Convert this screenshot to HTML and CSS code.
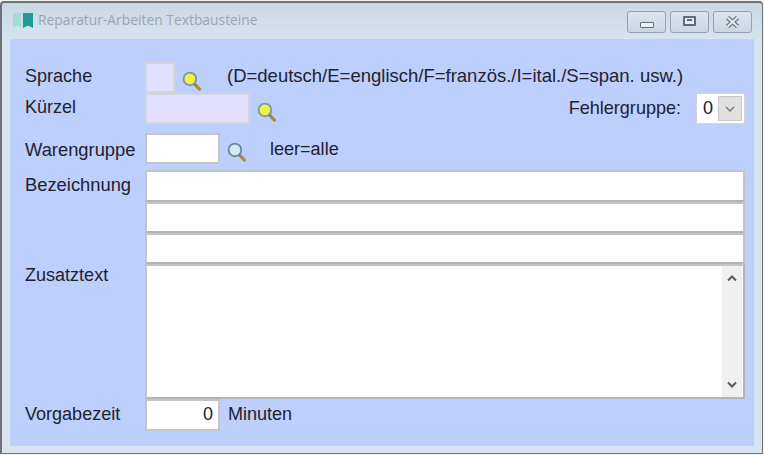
FILE: index.html
```html
<!DOCTYPE html>
<html lang="de">
<head>
<meta charset="utf-8">
<title>Reparatur-Arbeiten Textbausteine</title>
<link rel="stylesheet" href="styles.css">
</head>
<body>
<svg width="0" height="0" class="defs">
  <defs>
    <symbol id="lens" viewBox="0 0 18 19">
      <path d="M12 12.5 L16.5 17.2" stroke="#b08a2c" stroke-width="3" stroke-linecap="round"/>
      <path d="M11.5 12 L13 13.6" stroke="#7d8288" stroke-width="2.8"/>
    </symbol>
  </defs>
</svg>
<div class="window">
  <header class="titlebar">
    <svg class="appicon" width="20" height="15" viewBox="0 0 20 15">
      <path d="M0 0H8V15L4 12.5L0 15Z" fill="#a6dcd6"/>
      <path d="M10 0H20V15L15 12.5L10 15Z" fill="#1f9a94"/>
    </svg>
    <span class="title">Reparatur-Arbeiten Textbausteine</span>
    <div class="controls">
      <button class="ctl" type="button" aria-label="Minimieren"><span class="g-min"></span></button>
      <button class="ctl" type="button" aria-label="Maximieren"><span class="g-max"></span></button>
      <button class="ctl" type="button" aria-label="Schließen">
        <svg width="15" height="12" viewBox="0 0 15 12"><path d="M2.5 1.5L12.5 10.5M12.5 1.5L2.5 10.5" stroke="#69757f" stroke-width="4.4"/><path d="M2.5 1.5L12.5 10.5M12.5 1.5L2.5 10.5" stroke="#e4eaef" stroke-width="2"/></svg>
      </button>
    </div>
  </header>
  <main class="client">
    <div class="row">
      <label class="lbl">Sprache</label>
      <input class="field lilac w-s" type="text">
      <svg class="lens" width="19" height="20" viewBox="0 0 18 19"><use href="#lens"/><circle cx="7.5" cy="7.5" r="6" fill="#f0f04a" stroke="#7f97a8" stroke-width="1.8"/></svg>
      <span class="hint">(D=deutsch/E=englisch/F=französ./I=ital./S=span. usw.)</span>
    </div>
    <div class="row">
      <label class="lbl">Kürzel</label>
      <input class="field lilac w-m" type="text">
      <svg class="lens" width="19" height="20" viewBox="0 0 18 19"><use href="#lens"/><circle cx="7.5" cy="7.5" r="6" fill="#f0f04a" stroke="#7f97a8" stroke-width="1.8"/></svg>
      <span class="group-label">Fehlergruppe:</span>
      <div class="combo"><span class="combo-val">0</span><span class="combo-btn"><svg width="12" height="8" viewBox="0 0 12 8"><path d="M2 2L6 6L10 2" fill="none" stroke="#777" stroke-width="1.5"/></svg></span></div>
    </div>
    <div class="row gap-a">
      <label class="lbl wide low">Warengruppe</label>
      <input class="field w-l" type="text">
      <svg class="lens" width="19" height="20" viewBox="0 0 18 19"><use href="#lens"/><circle cx="7.5" cy="7.5" r="6" fill="#d3e9f4" stroke="#6f8ba0" stroke-width="1.8"/></svg>
      <span class="hint-b">leer=alle</span>
    </div>
    <div class="row row-first gap-b">
      <label class="lbl wide">Bezeichnung</label>
      <input class="field fill" type="text">
    </div>
    <div class="row">
      <span class="lbl"></span>
      <input class="field fill" type="text">
    </div>
    <div class="row">
      <span class="lbl"></span>
      <input class="field fill" type="text">
    </div>
    <div class="row row-text">
      <label class="lbl lbl-top">Zusatztext</label>
      <div class="memo">
        <div class="scroll">
          <svg width="12" height="8" viewBox="0 0 12 8"><path d="M2 6.5L6 2.5L10 6.5" fill="none" stroke="#5a5a5a" stroke-width="2"/></svg>
          <svg width="12" height="8" viewBox="0 0 12 8"><path d="M2 1.5L6 5.5L10 1.5" fill="none" stroke="#5a5a5a" stroke-width="2"/></svg>
        </div>
      </div>
    </div>
    <div class="row">
      <label class="lbl flat">Vorgabezeit</label>
      <input class="field w-l num" type="text" value="0">
      <span class="unit">Minuten</span>
    </div>
  </main>
</div>
</body>
</html>
```
FILE: styles.css
```css
* { box-sizing: border-box; }
html, body { margin: 0; height: 100%; background: #f4f4f4; }
body { padding: 1px 1px 1px 0; font-family: "Liberation Sans", Arial, sans-serif; font-size: 18.05px; color: #22222e; overflow: hidden; }
.defs { position: absolute; }
.window {
  width: 763px; height: 453px;
  border: 2px solid #6f7275; border-width: 2px 1px 1px 2px;
  border-top-left-radius: 4px; border-top-right-radius: 4px;
  background: linear-gradient(#c9d8e2, #d8e5f1 40px);
  padding: 0 8px 7px 8px;
  display: flex; flex-direction: column;
}
.titlebar { height: 36px; display: flex; align-items: center; flex: none; padding-bottom: 6px; }
.appicon { margin: 5px 3px 0 3px; flex: none; }
.title { font-family: "Open Sans", sans-serif; font-size: 13.85px; color: #9aa6ad; margin: 3px 0 0 2px; white-space: nowrap; }
.controls { margin-left: auto; display: flex; gap: 4px; margin-right: 2px; margin-top: 8px; }
.ctl {
  width: 39px; height: 22px; padding: 0;
  border: 1px solid #94a2ae; border-radius: 3px;
  background: linear-gradient(#dbe5ed, #cad7e2);
  display: flex; align-items: center; justify-content: center;
}
.g-min { display: block; width: 14px; height: 6px; margin-top: 5px; background: #eef2f5; border: 1px solid #5f6b76; border-radius: 1px; }
.g-max { display: block; width: 13px; height: 10px; border: 2px solid #5f6b76; border-radius: 1px; background: #e6edf3; margin-top: -2px; }
.g-max::after { content: ""; display: block; width: 5px; height: 2px; margin: 1px auto 0; background: #5f6b76; }
.client {
  flex: 1; background: #bccffd;
  padding: 23px 9px 15px 15px;
  display: flex; flex-direction: column;
}
.row { display: flex; align-items: center; height: 31px; flex: none; }
.row-first { height: 32px; }
.gap-a { margin-top: 9px; }
.gap-b { margin-top: 6px; }
.lbl { width: 120px; flex: none; margin-top: -2px; }
.wide { font-size: 18.35px; }
.low { margin-top: 2px; }
.flat { margin-top: 0; }
.field {
  height: 100%; padding: 0 3px; margin: 0;
  border: 2px solid #c3c3c8; border-radius: 0; background: #fff;
  font: inherit; color: inherit; outline: none;
}
.lilac { background: #e1e1ff; border-color: #d4d4dc; }
.w-s { width: 30px; }
.w-m { width: 105px; }
.w-l { width: 75px; }
.fill { flex: 1; min-width: 0; border-bottom-color: #b4b4b8; }
.num { text-align: right; padding: 0 5px 0 3px; height: 32px; }
.lens { flex: none; margin: 7px 0 0 7px; }
.hint { margin: -4px 0 0 26px; white-space: nowrap; font-size: 18.5px; }
.hint-b { margin: 2px 0 0 24px; white-space: nowrap; }
.group-label { margin-left: auto; margin-right: 15px; }
.combo { width: 49px; height: 100%; display: flex; background: #fff; border: 1px solid #d3d3d8; flex: none; }
.combo-val { flex: 1; padding-left: 6px; line-height: 29px; }
.combo-btn { width: 24px; margin: 2px; margin-left: 0; background: #e0e0e0; border: 1px solid #c9c9c9; display: flex; align-items: center; justify-content: center; }
.row-text { height: 135px; align-items: flex-start; }
.lbl-top { margin-top: 1px; }
.memo { flex: 1; height: 100%; background: #fff; border: 2px solid #c3c3c8; border-bottom-color: #b4b4b8; border-right-color: #b4b4b8; display: flex; justify-content: flex-end; padding-right: 1px; }
.scroll { width: 20px; background: #f0f0f0; display: flex; flex-direction: column; justify-content: space-between; align-items: center; padding: 8px 0; }
.unit { margin: 0 0 0 8px; }
```
